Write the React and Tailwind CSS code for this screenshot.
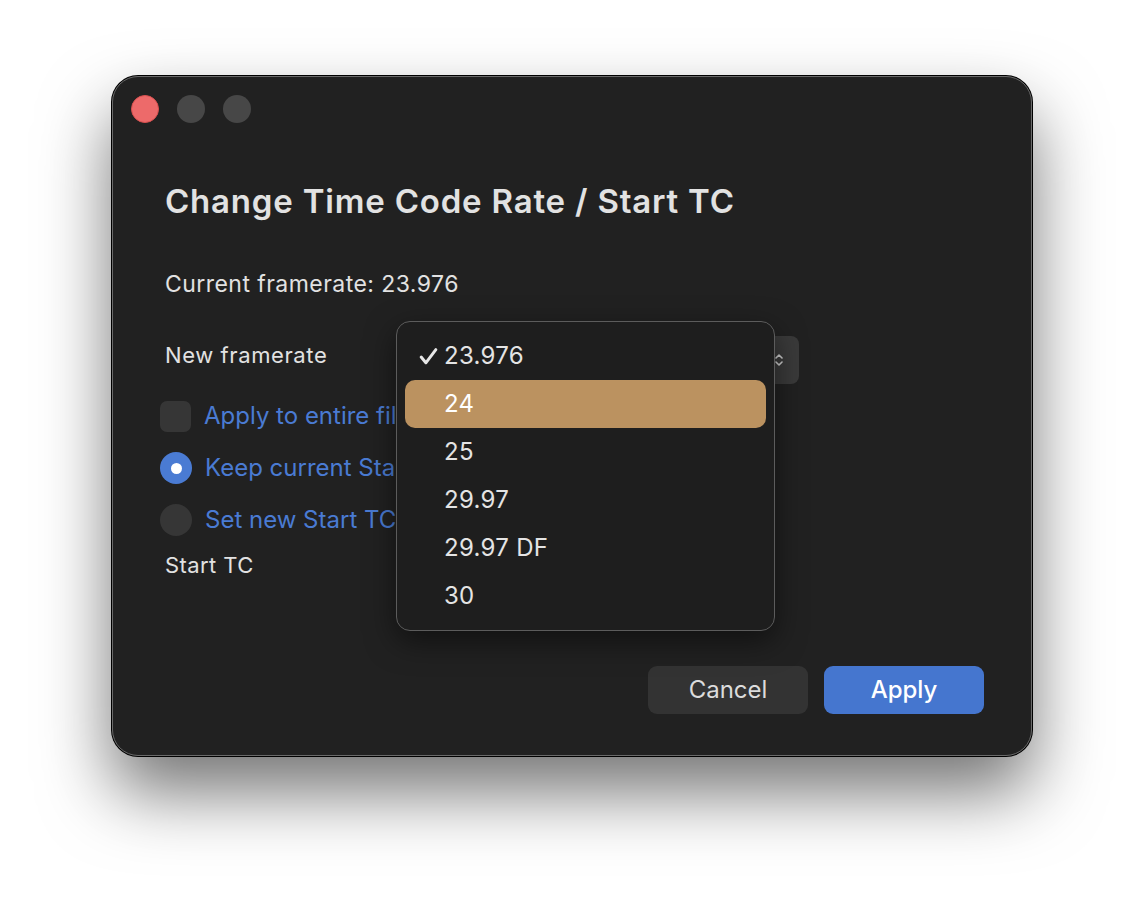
import React from "react";

const RATES = ["23.976", "24", "25", "29.97", "29.97 DF", "30"];

function TrafficLights() {
  return (
    <div className="flex gap-[18px] pl-[18px] pt-[18px]">
      <span className="w-[28px] h-[28px] rounded-full bg-[#ed6a6a] border border-[#d9504f]" />
      <span className="w-[28px] h-[28px] rounded-full bg-[#474747]" />
      <span className="w-[28px] h-[28px] rounded-full bg-[#474747]" />
    </div>
  );
}

function Checkbox() {
  return <span className="w-[31px] h-[31px] rounded-[7px] bg-[#363636] shrink-0" />;
}

function Radio({ checked }) {
  if (checked) {
    return (
      <span className="w-[32px] h-[32px] rounded-full bg-[#4a7bd3] flex items-center justify-center shrink-0">
        <span className="w-[11px] h-[11px] rounded-full bg-white" />
      </span>
    );
  }
  return <span className="w-[32px] h-[32px] rounded-full bg-[#363636] shrink-0" />;
}

function RateMenu({ selected, highlighted }) {
  return (
    <div className="absolute left-[-2px] top-[-15px] w-[379px] rounded-[14px] border border-[#5c5c5c] bg-[#1e1e1e] shadow-[0_10px_30px_rgba(0,0,0,0.5)] px-[8px] pt-[10px] pb-[10px] z-10">
      {RATES.map((r) => (
        <div
          key={r}
          className={
            "h-[48px] flex items-center rounded-[10px] text-[24px] tracking-[0.3px] " +
            (r === highlighted ? "bg-[#bb9260] text-white" : "text-[#e4e4e4]")
          }
        >
          <span className="w-[39px] flex justify-end pr-[5px]">
            {r === selected && (
              <svg width="21" height="21" viewBox="0 0 20 20" fill="none">
                <path d="M3 10.5l4.5 5.5L17 3.5" stroke="#e6e6e6" strokeWidth="2.8" strokeLinecap="round" strokeLinejoin="round" />
              </svg>
            )}
          </span>
          <span>{r}</span>
        </div>
      ))}
    </div>
  );
}

export default function App() {
  return (
    <div
      className="w-[1144px] h-[904px] bg-white pl-[112px] pt-[76px]"
      style={{ fontFamily: "Inter, 'Noto Sans', sans-serif" }}
    >
      <div className="w-[920px] h-[680px] rounded-[26px] bg-[#212121] border border-[#6a6a6a] ring-1 ring-black shadow-[0_36px_70px_rgba(0,0,0,0.55)] flex flex-col">
        <TrafficLights />

        <div className="pl-[52px] pr-[47px] flex flex-col flex-1">
          <h1 className="mt-[58px] text-[33px] font-semibold text-[#e2e2e2] tracking-[0.8px] leading-[40px]">
            Change Time Code Rate / Start TC
          </h1>

          <p className="mt-[48px] text-[23px] text-[#e2e2e2] tracking-[0.45px] leading-[30px]">Current framerate: 23.976</p>

          <div className="mt-[32px] flex items-center h-[48px]">
            <span className="w-[233px] text-[22px] text-[#e2e2e2] tracking-[0.6px]">New framerate</span>
            <div className="relative mt-[10px]">
              <div className="w-[401px] h-[48px] rounded-[8px] bg-[#3a3a3a] flex items-center justify-end pr-[16px]">
                <svg width="8" height="16" viewBox="0 0 8 16" fill="none">
                  <path d="M1 6l3-3 3 3M1 10l3 3 3-3" stroke="#d0d0d0" strokeWidth="1.6" strokeLinecap="round" strokeLinejoin="round" />
                </svg>
              </div>
              <RateMenu selected="23.976" highlighted="24" />
            </div>
          </div>

          <div className="mt-[21px] flex flex-col gap-[20px] -ml-[5px]">
            <label className="flex items-center gap-[13px] text-[24px] leading-[32px] text-[#4a7bd3]">
              <Checkbox />
              <span>Apply to entire file</span>
            </label>
            <label className="flex items-center gap-[13px] text-[24px] leading-[32px] text-[#4a7bd3]">
              <Radio checked />
              <span>Keep current Start TC</span>
            </label>
            <label className="flex items-center gap-[13px] text-[24px] leading-[32px] text-[#4a7bd3]">
              <Radio />
              <span>Set new Start TC</span>
            </label>
          </div>

          <div className="mt-[14px] flex items-center h-[30px]">
            <span className="text-[22px] text-[#e2e2e2] tracking-[0.4px]">Start TC</span>
          </div>

          <div className="mt-auto mb-[41px] flex justify-end gap-[16px]">
            <button className="w-[160px] h-[48px] rounded-[9px] bg-[#333333] text-[24px] text-[#dcdcdc]">Cancel</button>
            <button className="w-[160px] h-[48px] rounded-[9px] bg-[#4576cf] text-[24px] text-white font-medium">Apply</button>
          </div>
        </div>
      </div>
    </div>
  );
}
